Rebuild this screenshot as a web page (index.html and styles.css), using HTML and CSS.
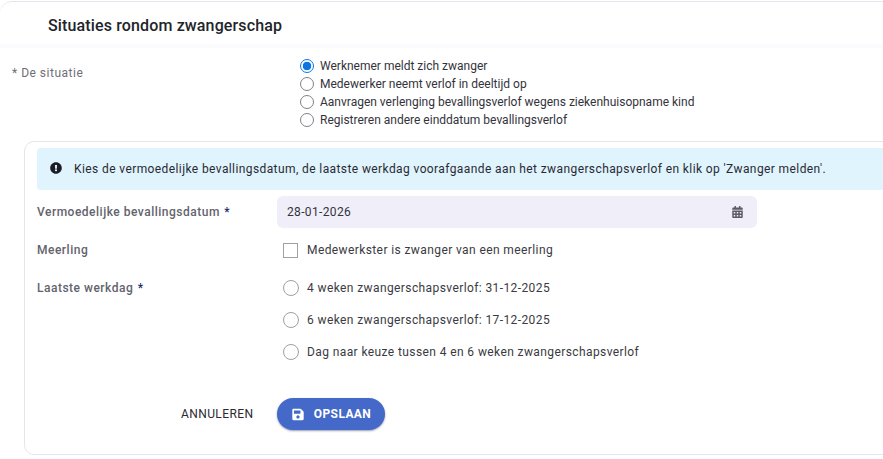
FILE: index.html
```html
<!DOCTYPE html>
<html lang="nl">
<head>
<meta charset="utf-8">
<title>Situaties rondom zwangerschap</title>
<link rel="stylesheet" href="styles.css">
</head>
<body>
<div class="page">
  <header class="head"><h1>Situaties rondom zwangerschap</h1></header>
  <section class="situation">
    <div class="sit-label">* De situatie</div>
    <div class="sit-options">
      <label class="sit-opt"><span class="r14 on"></span>Werknemer meldt zich zwanger</label>
      <label class="sit-opt"><span class="r14"></span>Medewerker neemt verlof in deeltijd op</label>
      <label class="sit-opt"><span class="r14"></span>Aanvragen verlenging bevallingsverlof wegens ziekenhuisopname kind</label>
      <label class="sit-opt"><span class="r14"></span>Registreren andere einddatum bevallingsverlof</label>
    </div>
  </section>
  <section class="card">
    <div class="notice">
      <svg class="notice-icon" viewBox="0 0 512 512" aria-hidden="true"><path d="M504 256c0 137-111 248-248 248S8 393 8 256 119 8 256 8s248 111 248 248zm-248 50c-25 0-46 21-46 46s21 46 46 46 46-21 46-46-21-46-46-46zm-44-165 7 136c.3 6 6 11 12 11h50c6 0 12-5 12-11l7-136c.3-7-5-13-12-13h-64c-7 0-12 6-12 13z"/></svg>
      <span>Kies de vermoedelijke bevallingsdatum, de laatste werkdag voorafgaande aan het zwangerschapsverlof en klik op 'Zwanger melden'.</span>
    </div>
    <div class="row row-date">
      <div class="lbl">Vermoedelijke bevallingsdatum <b>*</b></div>
      <div class="date">
        <span>28-01-2026</span>
        <svg class="cal" viewBox="0 0 448 512" aria-hidden="true"><path d="M0 464c0 26.500 21.500 48 48 48h352c26.500 0 48-21.500 48-48V192H0v272zm320-196c0-6.600 5.400-12 12-12h40c6.600 0 12 5.400 12 12v40c0 6.600-5.400 12-12 12h-40c-6.600 0-12-5.400-12-12v-40zm0 128c0-6.600 5.400-12 12-12h40c6.600 0 12 5.400 12 12v40c0 6.600-5.400 12-12 12h-40c-6.600 0-12-5.400-12-12v-40zM192 268c0-6.600 5.400-12 12-12h40c6.600 0 12 5.400 12 12v40c0 6.600-5.400 12-12 12h-40c-6.600 0-12-5.400-12-12v-40zm0 128c0-6.600 5.400-12 12-12h40c6.600 0 12 5.400 12 12v40c0 6.600-5.400 12-12 12h-40c-6.600 0-12-5.400-12-12v-40zM64 268c0-6.600 5.400-12 12-12h40c6.600 0 12 5.400 12 12v40c0 6.600-5.400 12-12 12H76c-6.600 0-12-5.400-12-12v-40zm0 128c0-6.600 5.400-12 12-12h40c6.600 0 12 5.400 12 12v40c0 6.600-5.400 12-12 12H76c-6.600 0-12-5.400-12-12v-40zM400 64h-48V16c0-8.800-7.200-16-16-16h-32c-8.800 0-16 7.200-16 16v48H160V16c0-8.800-7.200-16-16-16h-32c-8.800 0-16 7.200-16 16v48H48C21.500 64 0 85.500 0 112v48h448v-48c0-26.500-21.500-48-48-48z"/></svg>
      </div>
    </div>
    <div class="row row-multi">
      <div class="lbl">Meerling</div>
      <label class="choice"><span class="box"></span>Medewerkster is zwanger van een meerling</label>
    </div>
    <div class="row row-last">
      <div class="lbl">Laatste werkdag <b>*</b></div>
      <div class="choices">
        <label class="choice"><span class="r16"></span>4 weken zwangerschapsverlof: 31-12-2025</label>
        <label class="choice"><span class="r16"></span>6 weken zwangerschapsverlof: 17-12-2025</label>
        <label class="choice"><span class="r16"></span>Dag naar keuze tussen 4 en 6 weken zwangerschapsverlof</label>
      </div>
    </div>
    <div class="actions">
      <button class="cancel" type="button">ANNULEREN</button>
      <button class="save" type="button">
        <svg viewBox="0 0 448 512" aria-hidden="true"><path d="M433.900 129.900l-83.900-83.900A48 48 0 0 0 316.100 32H48C21.500 32 0 53.500 0 80v352c0 26.500 21.500 48 48 48h352c26.500 0 48-21.500 48-48V163.900a48 48 0 0 0-14.100-34zM224 416c-35.300 0-64-28.700-64-64 0-35.300 28.700-64 64-64s64 28.700 64 64c0 35.300-28.700 64-64 64zm96-304.500V212c0 6.600-5.400 12-12 12H76c-6.600 0-12-5.400-12-12V108c0-6.600 5.400-12 12-12h228.500c3.200 0 6.200 1.300 8.500 3.500l3.500 3.500c2.200 2.200 3.500 5.300 3.500 8.500z"/></svg>
        OPSLAAN
      </button>
    </div>
  </section>
</div>
</body>
</html>
```
FILE: styles.css
```css
* { box-sizing: border-box; }
html, body { margin: 0; padding: 0; }
body {
  width: 883px;
  height: 459px;
  overflow: hidden;
  background: #fff;
  font-family: Roboto, "Liberation Sans", sans-serif;
  color: #2b2b33;
}
.page { width: 883px; padding-top: 1px; overflow: hidden; }
.head {
  height: 47px;
  border-top: 1px solid #e6e6ee;
  border-top-left-radius: 12px;
  border-bottom: 4px solid #fbfbfd;
  padding: 13px 0 0 48px;
}
.head h1 {
  margin: 0;
  font-size: 16px;
  line-height: 22px;
  font-weight: 500;
  color: #212529;
  letter-spacing: 0.14px;
}
.situation {
  display: flex;
  padding: 9px 0 0 12px;
  height: 93px;
}
.sit-label {
  width: 288px;
  flex: none;
  font-size: 12px;
  line-height: 18px;
  padding-top: 7px;
  letter-spacing: 0.5px;
  color: #6f6f78;
}
.sit-options { display: flex; flex-direction: column; }
.sit-opt {
  display: flex;
  align-items: center;
  height: 18px;
  gap: 6px;
  font-size: 12px;
  color: #33333b;
}
.r14 {
  width: 14px;
  height: 14px;
  border-radius: 50%;
  border: 1px solid #808088;
  background: #fff;
  flex: none;
}
.r14.on {
  border: 1px solid #0b76e0;
  background: radial-gradient(circle, #0b76e0 0 4px, #fff 4.600px);
}
.card {
  width: 920px;
  height: 314px;
  margin-left: 24px;
  border: 1px solid #e5e5ee;
  border-radius: 10px;
  padding: 6px 0 0 12px;
}
.notice {
  display: flex;
  align-items: center;
  width: 870px;
  height: 42px;
  background: #e0f4fe;
  border-radius: 4px;
  padding: 0 0 0 13px;
  font-size: 12px;
  letter-spacing: 0.4px;
  color: #2a2a32;
}
.notice-icon { width: 12px; height: 12px; margin: -3px 12px 0 0; fill: #1d1d26; flex: none; }
.row { display: flex; align-items: center; }
.lbl {
  width: 240px;
  flex: none;
  font-size: 12px;
  font-weight: 500;
  letter-spacing: 0.5px;
  color: #63636d;
}
.lbl b { color: #1d2a6b; font-weight: 500; margin-left: 1px; }
.row-date { margin-top: 6px; height: 32px; }
.date {
  width: 480px;
  height: 32px;
  border-radius: 6px;
  background: #f0eff9;
  display: flex;
  align-items: center;
  justify-content: space-between;
  padding: 0 14px 0 10px;
  font-size: 12px;
  letter-spacing: 0.35px;
  color: #33333b;
}
.cal { width: 11px; height: 12px; fill: #5c5c66; }
.choice {
  display: flex;
  align-items: center;
  height: 32px;
  gap: 8px;
  font-size: 12px;
  letter-spacing: 0.4px;
  color: #3a3a42;
}
.row-multi { margin-top: 6px; height: 32px; }
.row-multi .choice { margin-left: 6px; gap: 9px; }
.box {
  width: 15px;
  height: 15px;
  border: 1px solid #a0a0a4;
  flex: none;
}
.row-last { margin-top: 6px; align-items: flex-start; }
.row-last .lbl { line-height: 32px; }
.choices { display: flex; flex-direction: column; margin-left: 6px; }
.r16 {
  width: 16px;
  height: 16px;
  border-radius: 50%;
  border: 1px solid #a0a0a4;
  flex: none;
}
.actions {
  display: flex;
  align-items: center;
  gap: 24px;
  margin-top: 30px;
  padding-left: 144px;
}
.cancel {
  width: 72px;
  height: 32px;
  padding: 0;
  border: 0;
  background: none;
  white-space: nowrap;
  text-align: left;
  font: 400 12px Roboto, sans-serif;
  letter-spacing: 0.4px;
  color: #2a2a32;
}
.save {
  display: flex;
  align-items: center;
  justify-content: center;
  gap: 10px;
  width: 108px;
  height: 32px;
  border: 0;
  padding: 0;
  border-radius: 16px;
  background: #4469c9;
  box-shadow: 0 1px 2px rgba(30, 40, 90, 0.45);
  color: #fff;
  font: 700 12px Roboto, sans-serif;
  letter-spacing: 0.4px;
}
.save svg { width: 12px; height: 13px; margin-left: 1px; fill: #fff; }
```
